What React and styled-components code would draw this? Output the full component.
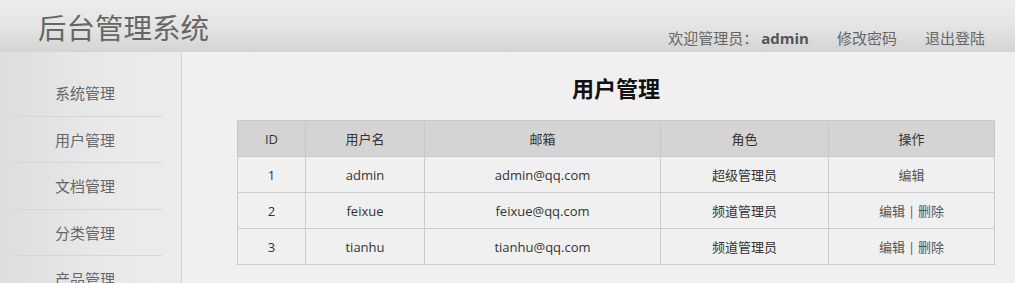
import React from 'react'
import styled, { createGlobalStyle } from 'styled-components'

const GlobalStyle = createGlobalStyle`
  html, body {
    margin: 0;
    padding: 0;
    background: #f0f0f0;
    font-family: "Open Sans", "Noto Sans CJK SC", sans-serif;
  }
`

const users = [
  { id: 1, name: 'admin', email: 'admin@qq.com', role: '超级管理员', canDelete: false },
  { id: 2, name: 'feixue', email: 'feixue@qq.com', role: '频道管理员', canDelete: true },
  { id: 3, name: 'tianhu', email: 'tianhu@qq.com', role: '频道管理员', canDelete: true },
]

const menu = ['系统管理', '用户管理', '文档管理', '分类管理', '产品管理']

export default function App() {
  return (
    <>
      <GlobalStyle />
      <Page>
        <Header>
          <Logo>后台管理系统</Logo>
          <UserBar>
            <UserLink>欢迎管理员：<b>admin</b></UserLink>
            <UserLink>修改密码</UserLink>
            <UserLink>退出登陆</UserLink>
          </UserBar>
        </Header>
        <Body>
          <Sidebar>
            {menu.map((m) => (
              <MenuItem key={m}>{m}</MenuItem>
            ))}
          </Sidebar>
          <Main>
            <Title>用户管理</Title>
            <Table>
              <colgroup>
                <col style={{ width: 68 }} />
                <col style={{ width: 119 }} />
                <col style={{ width: 236 }} />
                <col style={{ width: 168 }} />
                <col />
              </colgroup>
              <thead>
                <tr>
                  <Th>ID</Th>
                  <Th>用户名</Th>
                  <Th>邮箱</Th>
                  <Th>角色</Th>
                  <Th>操作</Th>
                </tr>
              </thead>
              <tbody>
                {users.map((u) => (
                  <tr key={u.id}>
                    <Td>{u.id}</Td>
                    <Td>{u.name}</Td>
                    <Td>{u.email}</Td>
                    <Td>{u.role}</Td>
                    <Td>
                      <Action>编辑</Action>
                      {u.canDelete && (
                        <>
                          <Sep>|</Sep>
                          <Action>删除</Action>
                        </>
                      )}
                    </Td>
                  </tr>
                ))}
              </tbody>
            </Table>
          </Main>
        </Body>
      </Page>
    </>
  )
}

const Page = styled.div`
  width: 1015px;
  height: 283px;
  overflow: hidden;
`

const Header = styled.div`
  height: 52px;
  display: flex;
  align-items: stretch;
  justify-content: space-between;
  background: linear-gradient(to bottom, #ededed 0%, #e4e4e4 50%, #d4d4d4 100%);
  box-sizing: border-box;
  padding: 0 30px 0 38px;
`

const Logo = styled.div`
  font-size: 28.5px;
  color: #666;
  line-height: 56px;
  margin-top: -1px;
  font-family: "Noto Sans CJK SC", sans-serif;
  font-weight: 400;
`

const UserBar = styled.div`
  display: flex;
  align-items: flex-end;
  gap: 28px;
  padding-bottom: 3px;
`

const UserLink = styled.span`
  font-size: 15px;
  color: #666;
  line-height: 22px;
  & b {
    color: #555;
    font-weight: 700;
    font-family: "Open Sans", sans-serif;
    margin-left: 3px;
  }
`

const Body = styled.div`
  display: flex;
  height: 231px;
`

const Sidebar = styled.div`
  width: 182px;
  flex-shrink: 0;
  background: linear-gradient(to right, #dedede 0%, #e9e9e9 60%, #ececec 100%);
  border-right: 1px solid #d2d2d2;
  box-shadow: 1px 0 0 #fafafa;
  padding: 18px 0 0 12px;
  box-sizing: border-box;
  overflow: hidden;
`

const MenuItem = styled.div`
  width: 150px;
  height: 46.5px;
  line-height: 46px;
  text-align: center;
  font-size: 15px;
  color: #666;
  border-bottom: 1px solid #d6d6d6;
  box-sizing: border-box;
  padding-right: 4px;
`

const Main = styled.div`
  flex: 1;
  background: #f0f0f0;
  padding: 0 20px 0 55px;
`

const Title = styled.h2`
  margin: 0;
  padding: 21px 0 0;
  height: 68px;
  box-sizing: border-box;
  text-align: center;
  font-size: 22px;
  line-height: 30px;
  font-weight: 700;
  color: #111;
`

const Table = styled.table`
  width: 758px;
  border-collapse: collapse;
  table-layout: fixed;
  font-size: 13px;
  color: #333;
`

const Th = styled.th`
  height: 35px;
  padding: 0;
  background: #d4d4d4;
  border: 1px solid #c8c8c8;
  font-weight: 400;
  text-align: center;
`

const Td = styled.td`
  height: 35px;
  padding: 0;
  border: 1px solid #cccccc;
  text-align: center;
  background: #f0f0f0;
`

const Action = styled.span`
  color: #555;
`

const Sep = styled.span`
  color: #555;
  margin: 0 3px;
`
